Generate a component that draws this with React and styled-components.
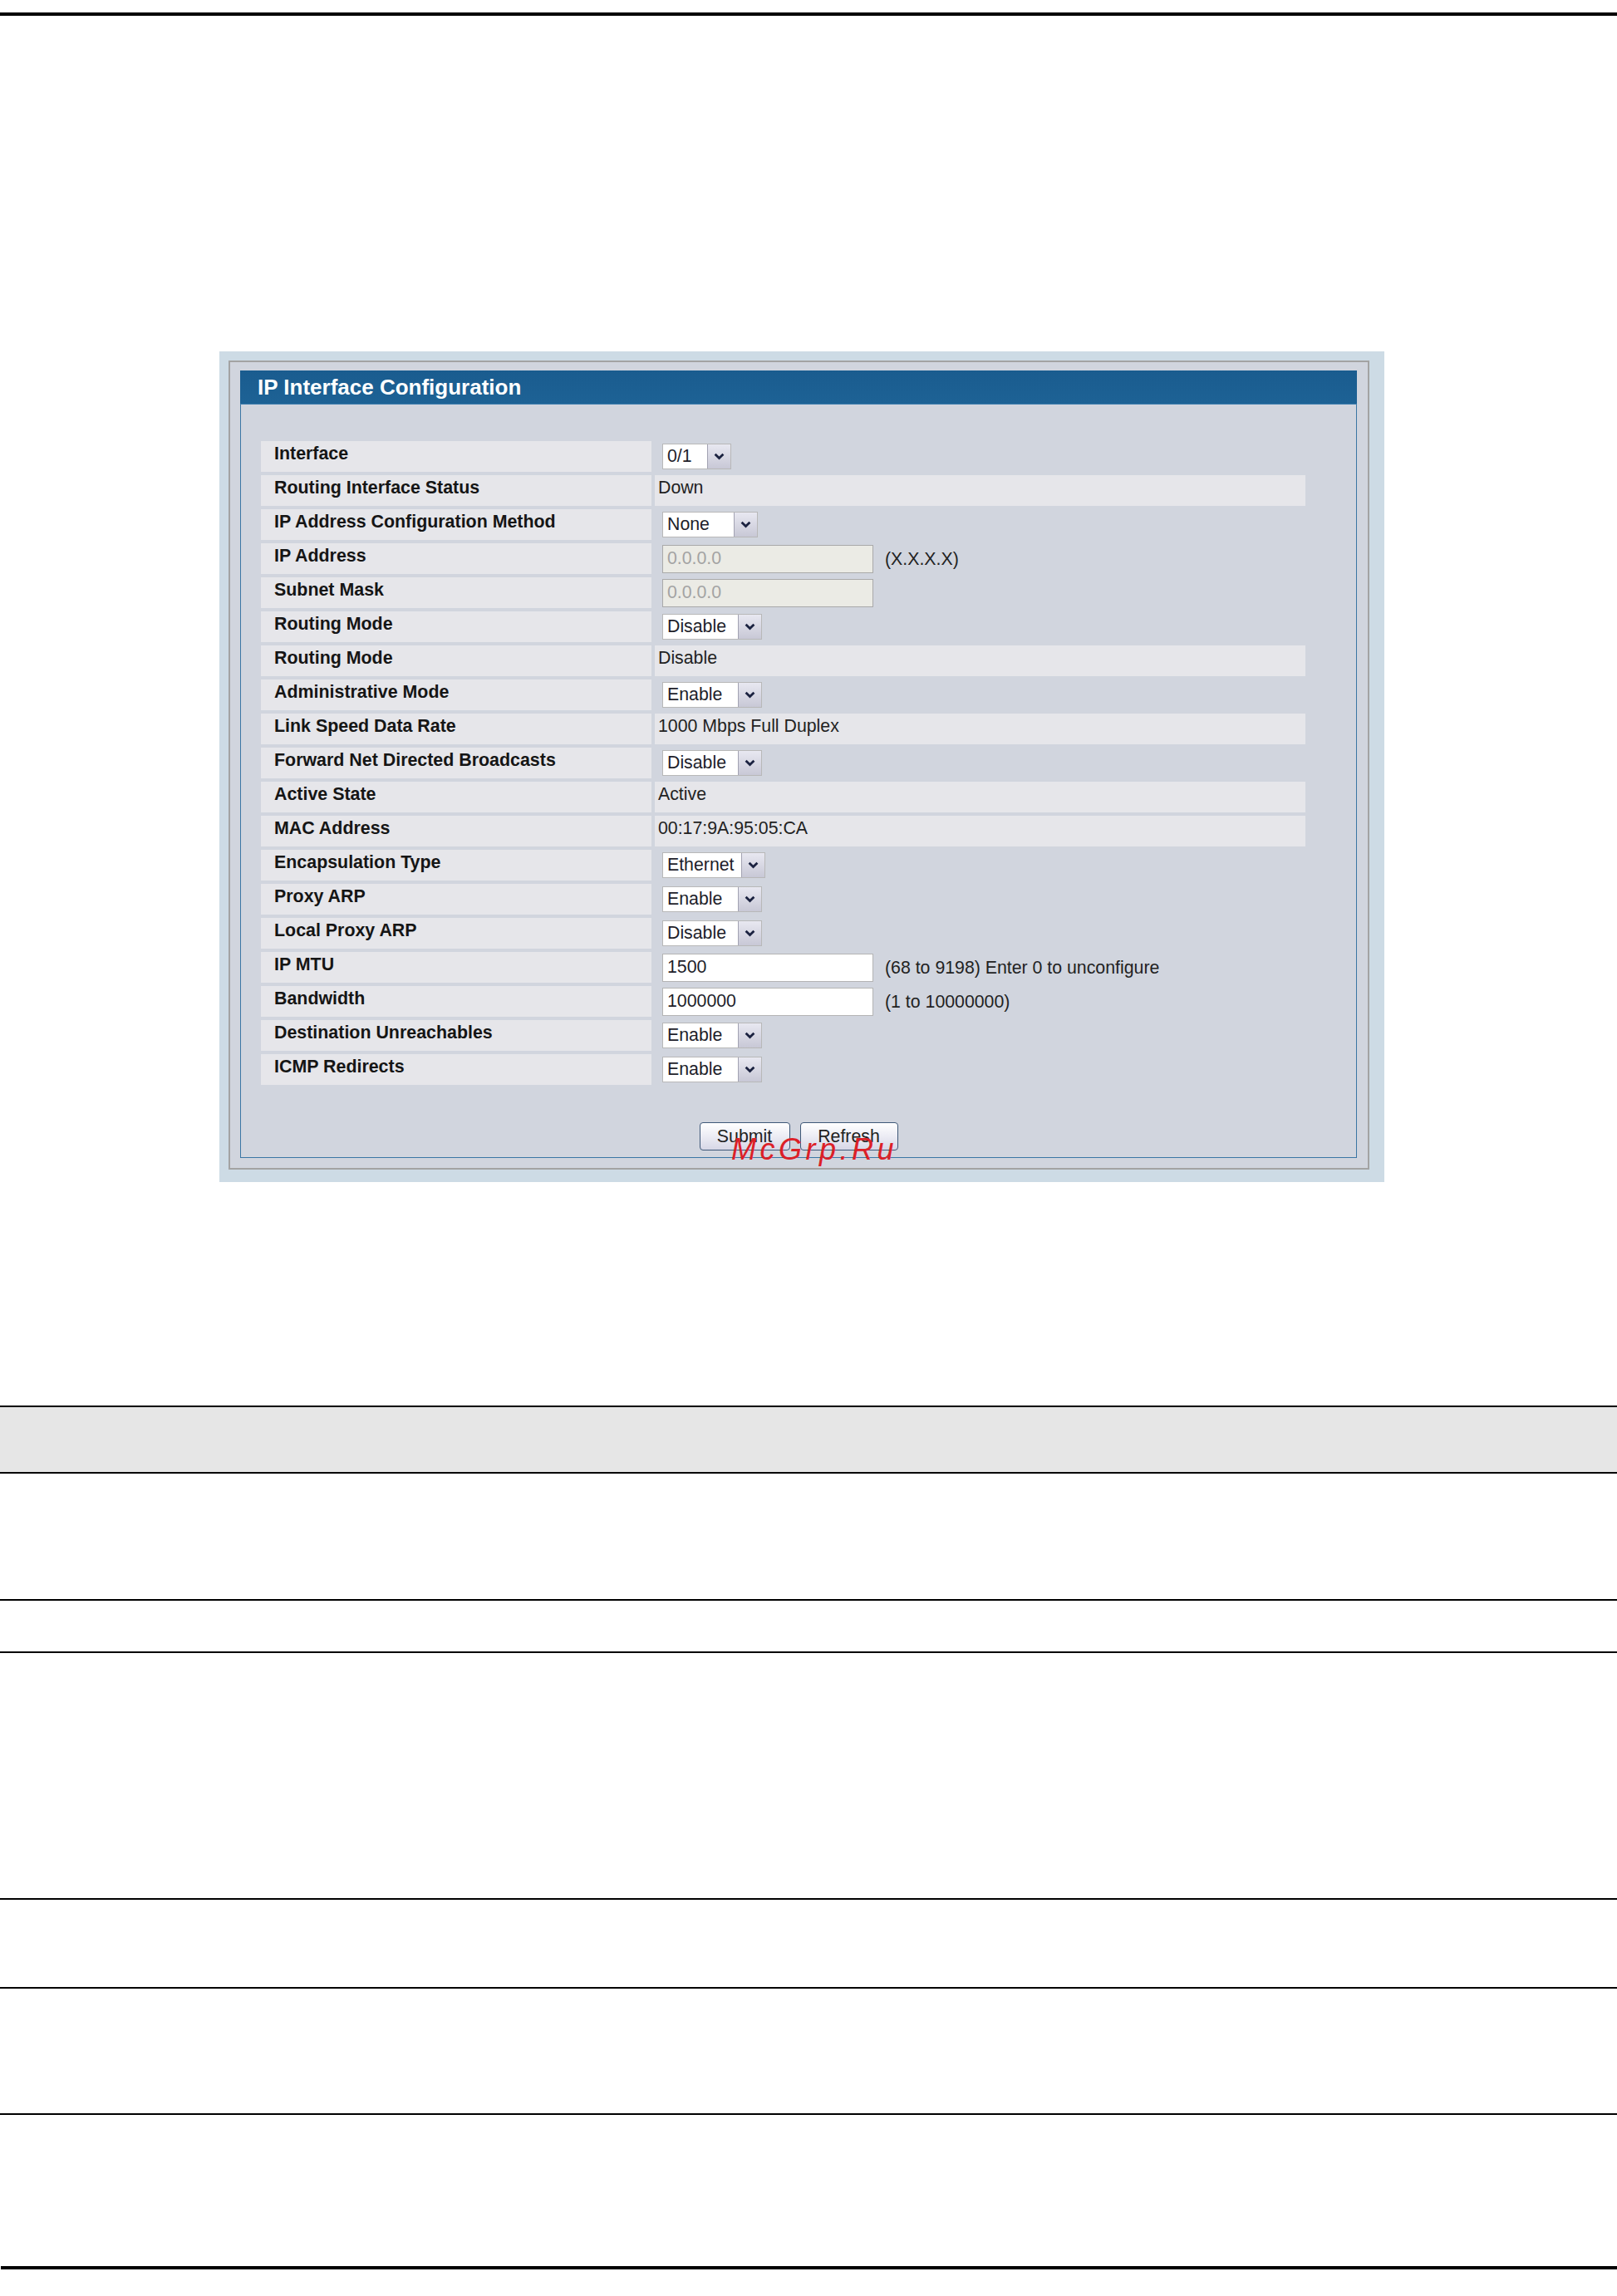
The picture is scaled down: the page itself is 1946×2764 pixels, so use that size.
import React from 'react'
import styled, { createGlobalStyle } from 'styled-components'

const rows = [
    { label: 'Interface', kind: 'select', value: '0/1', w: 83 },
    { label: 'Routing Interface Status', kind: 'text', value: 'Down' },
    { label: 'IP Address Configuration Method', kind: 'select', value: 'None', w: 115 },
    { label: 'IP Address', kind: 'input', value: '0.0.0.0', disabled: true, hint: '(X.X.X.X)' },
    { label: 'Subnet Mask', kind: 'input', value: '0.0.0.0', disabled: true },
    { label: 'Routing Mode', kind: 'select', value: 'Disable', w: 120 },
    { label: 'Routing Mode', kind: 'text', value: 'Disable' },
    { label: 'Administrative Mode', kind: 'select', value: 'Enable', w: 120 },
    { label: 'Link Speed Data Rate', kind: 'text', value: '1000 Mbps Full Duplex' },
    { label: 'Forward Net Directed Broadcasts', kind: 'select', value: 'Disable', w: 120 },
    { label: 'Active State', kind: 'text', value: 'Active' },
    { label: 'MAC Address', kind: 'text', value: '00:17:9A:95:05:CA' },
    { label: 'Encapsulation Type', kind: 'select', value: 'Ethernet', w: 124 },
    { label: 'Proxy ARP', kind: 'select', value: 'Enable', w: 120 },
    { label: 'Local Proxy ARP', kind: 'select', value: 'Disable', w: 120 },
    { label: 'IP MTU', kind: 'input', value: '1500', hint: '(68 to 9198) Enter 0 to unconfigure' },
    { label: 'Bandwidth', kind: 'input', value: '1000000', hint: '(1 to 10000000)' },
    { label: 'Destination Unreachables', kind: 'select', value: 'Enable', w: 120 },
    { label: 'ICMP Redirects', kind: 'select', value: 'Enable', w: 120 },
]

// heights of the blank document table rows under the screenshot
const docRows = [
    { h: 78, shaded: true },
    { h: 151 },
    { h: 61 },
    { h: 295 },
    { h: 105 },
    { h: 150 },
]

const Chevron = () => (
    <svg width='13' height='9' viewBox='0 0 13 9'>
        <polyline points='1.6,1.8 6.5,6.6 11.4,1.8' fill='none' stroke='#1b2240' strokeWidth='2.8' />
    </svg>
)

const Select = ({ value, w }) => (
    <SelectBox $w={w}>
        <SelectText>{value}</SelectText>
        <SelectArrow>
            <Chevron />
        </SelectArrow>
    </SelectBox>
)

const Value = ({ row }) => {
    if (row.kind === 'text') {
        return <ValueCell $filled>{row.value}</ValueCell>
    }
    return (
        <ValueCell>
            {row.kind === 'select' && <Select value={row.value} w={row.w} />}
            {row.kind === 'input' && (
                <Field defaultValue={row.value} disabled={row.disabled} $disabled={row.disabled} />
            )}
            {row.hint && <Hint>{row.hint}</Hint>}
        </ValueCell>
    )
}

const App = () => {
    return (
        <Page>
            <GlobalStyle />
            <Rule $h={4} $top={15} />
            <Figure>
                <Frame>
                    <GrayBox>
                        <Panel>
                            <TitleBar>IP Interface Configuration</TitleBar>
                            <Body>
                                <Rows>
                                    {rows.map((row, i) => (
                                        <Row key={i}>
                                            <LabelCell>{row.label}</LabelCell>
                                            <Value row={row} />
                                        </Row>
                                    ))}
                                </Rows>
                                <ButtonBar>
                                    <Button $w={109}>Submit</Button>
                                    <Button $w={118}>Refresh</Button>
                                </ButtonBar>
                            </Body>
                        </Panel>
                    </GrayBox>
                </Frame>
            </Figure>
            <DocTable>
                {docRows.map((r, i) => (
                    <DocRow key={i} $h={r.h} $shaded={r.shaded} />
                ))}
            </DocTable>
            <Rule $h={4} $top={182} $left={1} />
            <Watermark>McGrp.Ru</Watermark>
        </Page>
    )
}

const GlobalStyle = createGlobalStyle`
    html, body {
        margin: 0;
        padding: 0;
        background: #fff;
    }
    body {
        font-family: "Liberation Sans", Arial, sans-serif;
    }
`

const Page = styled.div`
    position: relative;
    width: 1946px;
    height: 2764px;
    overflow: hidden;
    display: flex;
    flex-direction: column;
    background: #fff;
`

const Rule = styled.div`
    height: ${(p) => p.$h}px;
    margin-top: ${(p) => p.$top}px;
    margin-left: ${(p) => p.$left || 0}px;
    background: #000;
    flex-shrink: 0;
`

const Figure = styled.div`
    margin-top: 404px;
    padding-left: 264px;
`

const Frame = styled.div`
    width: 1402px;
    box-sizing: border-box;
    padding: 11px 18px 15px 11px;
    background: #cddbe5;
`

const GrayBox = styled.div`
    border: 2px solid #a3a3a3;
    background: #d1d5de;
    padding: 10px 13px 12px 12px;
`

const Panel = styled.div`
    border: 1px solid #3b76a4;
    border-top: none;
    background: #d1d5de;
`

const TitleBar = styled.div`
    height: 40px;
    margin: 0 -1px;
    padding-left: 21px;
    display: flex;
    align-items: center;
    background: linear-gradient(#1a5c8f, #1d6295);
    border-bottom: 1px solid #3f7fae;
    color: #fff;
    font-weight: bold;
    font-size: 26px;
`

const Body = styled.div`
    padding: 44px 61px 8px 24px;
`

const Rows = styled.div`
    display: flex;
    flex-direction: column;
    gap: 4px;
`

const Row = styled.div`
    display: grid;
    grid-template-columns: 470px 1fr;
    column-gap: 4px;
    height: 37px;
`

const LabelCell = styled.div`
    background: #e6e6ea;
    padding: 3px 0 0 16px;
    font-size: 21.4px;
    line-height: 24px;
    font-weight: bold;
    color: #151515;
    white-space: nowrap;
`

const ValueCell = styled.div`
    display: flex;
    align-items: ${(p) => (p.$filled ? 'flex-start' : 'center')};
    gap: 14px;
    padding: ${(p) => (p.$filled ? '3px 0 0 4px' : '0 0 0 9px')};
    background: ${(p) => (p.$filled ? '#e6e6ea' : 'transparent')};
    font-size: 21.3px;
    line-height: 24px;
    color: #222;
    white-space: nowrap;
`

const SelectBox = styled.div`
    display: flex;
    width: ${(p) => p.$w}px;
    height: 31px;
    box-sizing: border-box;
    background: #fff;
    border: 1px solid #b8b8b8;
`

const SelectText = styled.span`
    flex: 1;
    padding-left: 5px;
    font-size: 21.3px;
    line-height: 29px;
    color: #1e1e2a;
`

const SelectArrow = styled.span`
    width: 27px;
    display: flex;
    align-items: center;
    justify-content: center;
    background: linear-gradient(#e8e8f1, #c8c8d6);
    border-left: 1px solid #a2a2b2;
`

const Field = styled.input`
    width: 254px;
    height: 34px;
    box-sizing: border-box;
    margin: 0;
    padding: 0 0 0 5px;
    border: 1px solid ${(p) => (p.$disabled ? '#a9a9a9' : '#b4b4b4')};
    background: ${(p) => (p.$disabled ? '#ebebe5' : '#fff')};
    color: ${(p) => (p.$disabled ? '#a3a3a3' : '#1e1e2a')};
    font-family: "Liberation Sans", Arial, sans-serif;
    font-size: 21.3px;
    outline: none;

    &:disabled {
        color: #a3a3a3;
    }
`

const Hint = styled.span`
    color: #222;
`

// spans the whole panel width so the buttons centre on the panel, not on the rows
const ButtonBar = styled.div`
    display: flex;
    justify-content: center;
    gap: 12px;
    margin: 45px -61px 0 -24px;
`

const Button = styled.button`
    width: ${(p) => p.$w}px;
    height: 34px;
    padding: 0;
    border: 1px solid #3f5878;
    border-radius: 4px;
    background: linear-gradient(#ffffff, #ececf4 50%, #d7d7e6);
    font-family: "Liberation Sans", Arial, sans-serif;
    font-size: 21.3px;
    color: #222;
`

const DocTable = styled.div`
    margin-top: 269px;
    border-top: 2px solid #000;
`

const DocRow = styled.div`
    height: ${(p) => p.$h}px;
    background: ${(p) => (p.$shaded ? '#e6e6e6' : '#fff')};
    border-bottom: 2px solid #000;
`

const Watermark = styled.div`
    position: absolute;
    left: 880px;
    top: 1366px;
    font-size: 36px;
    line-height: 36px;
    font-style: italic;
    letter-spacing: 4.5px;
    color: #dc2027;
    pointer-events: none;
`

export default App
